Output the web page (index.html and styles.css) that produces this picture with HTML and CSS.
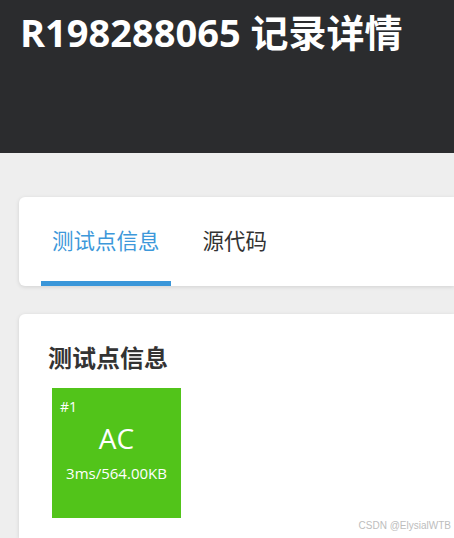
FILE: index.html
```html
<!DOCTYPE html>
<html lang="zh">
<head>
<meta charset="utf-8">
<link rel="stylesheet" href="styles.css">
</head>
<body>
<header class="hero">
  <h1 class="title">R198288065 记录详情</h1>
</header>
<main class="content">
  <section class="card tabs-card">
    <nav class="tabs">
      <div class="tab active">测试点信息</div>
      <div class="tab">源代码</div>
    </nav>
  </section>
  <section class="card info-card">
    <h2 class="heading">测试点信息</h2>
    <div class="cases">
      <div class="case ac">
        <div class="case-id">#1</div>
        <div class="case-status">AC</div>
        <div class="case-meta">3ms/564.00KB</div>
      </div>
    </div>
    <div class="watermark">CSDN @ElysialWTB</div>
  </section>
</main>
</body>
</html>
```

FILE: styles.css
```css
html, body {
  margin: 0;
  padding: 0;
}
body {
  width: 454px;
  height: 538px;
  overflow: hidden;
  background: #eeeeee;
  font-family: "Open Sans", "Noto Sans CJK SC", sans-serif;
}
.hero {
  background: #2b2c2e;
  height: 153px;
  box-sizing: border-box;
  padding: 6px 0 0 20px;
}
.title {
  margin: 0;
  color: #ffffff;
  font-size: 38px;
  font-weight: 700;
  line-height: 52px;
  white-space: nowrap;
}
.content {
  padding: 44px 0 0 19px;
  display: flex;
  flex-direction: column;
  gap: 28px;
}
.card {
  background: #ffffff;
  border-radius: 6px 0 0 6px;
  box-shadow: 0 1px 4px rgba(0, 0, 0, 0.12);
}
.tabs-card {
  height: 89px;
  padding: 0 0 0 22px;
  box-sizing: border-box;
}
.tabs {
  display: flex;
  gap: 21px;
  height: 100%;
}
.tab {
  font-family: "Noto Sans CJK SC", sans-serif;
  font-size: 21.5px;
  color: #333333;
  padding: 1px 11px 0;
  display: flex;
  align-items: center;
  box-sizing: border-box;
  height: 100%;
  border-bottom: 5px solid transparent;
}
.tab.active {
  color: #3d98da;
  border-bottom-color: #3a96d9;
}
.info-card {
  height: 224px;
  border-radius: 6px 0 0 0;
  padding: 28px 0 0 29px;
  box-sizing: border-box;
  position: relative;
}
.heading {
  margin: 0;
  font-family: "Noto Sans CJK SC", sans-serif;
  font-size: 24px;
  font-weight: 700;
  color: #333333;
  line-height: 30px;
}
.cases {
  display: flex;
  margin-top: 16px;
  padding-left: 4px;
}
.case {
  width: 129px;
  height: 130px;
  box-sizing: border-box;
  color: #ffffff;
  display: flex;
  flex-direction: column;
  align-items: center;
  padding-top: 10px;
}
.case.ac {
  background: #52c41a;
}
.case-id {
  align-self: flex-start;
  padding-left: 8px;
  font-size: 14px;
  font-weight: 500;
  line-height: 18px;
}
.case-status {
  font-size: 28px;
  line-height: 36px;
  margin-top: 4px;
}
.case-meta {
  font-size: 15px;
  line-height: 20px;
  margin-top: 7px;
}
.watermark {
  position: absolute;
  right: 3px;
  top: 206px;
  font-family: "Liberation Sans", sans-serif;
  font-size: 10px;
  color: #bdbdbd;
}
```
